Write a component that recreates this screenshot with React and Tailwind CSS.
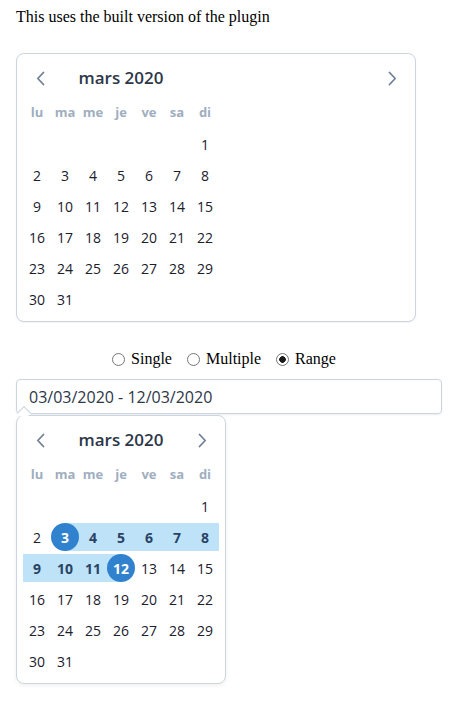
import { useState } from "react";

const WEEKDAYS = ["lu", "ma", "me", "je", "ve", "sa", "di"];

// mars 2020 starts on a sunday
const WEEKS = [
    [null, null, null, null, null, null, 1],
    [2, 3, 4, 5, 6, 7, 8],
    [9, 10, 11, 12, 13, 14, 15],
    [16, 17, 18, 19, 20, 21, 22],
    [23, 24, 25, 26, 27, 28, 29],
    [30, 31, null, null, null, null, null],
];

function Chevron({ dir }) {
    return (
        <svg width="9" height="15" viewBox="0 0 9 15" fill="none">
            <polyline
                points={dir === "left" ? "7.5,1.5 1.8,7.5 7.5,13.5" : "1.5,1.5 7.2,7.5 1.5,13.5"}
                stroke="#718096"
                strokeWidth="1.8"
                strokeLinecap="round"
                strokeLinejoin="round"
            />
        </svg>
    );
}

function DayCell({ day, range }) {
    if (!day) return <div className="h-[28px]"></div>;

    const inRange = range && day >= range[0] && day <= range[1];
    const isEdge = range && (day === range[0] || day === range[1]);

    let band = "";
    if (inRange && day === range[0]) band = "bg-[linear-gradient(to_right,transparent_50%,#bee3f8_50%)]";
    else if (inRange && day === range[1]) band = "bg-[linear-gradient(to_right,#bee3f8_50%,transparent_50%)]";
    else if (inRange) band = "bg-[#bee3f8]";

    return (
        <div className={`flex h-[28px] items-center justify-center ${band}`}>
            <span
                className={
                    isEdge
                        ? "flex h-[28px] w-[28px] items-center justify-center rounded-full bg-[#3182ce] font-bold text-white"
                        : inRange
                        ? "font-bold text-[#2a4365]"
                        : "text-[#1a202c]"
                }
            >
                {day}
            </span>
        </div>
    );
}

function Calendar({ range, className = "" }) {
    return (
        <div
            className={`rounded-lg border border-[#cbd5e0] bg-white px-[6px] pt-[10px] pb-[8px] font-['Open_Sans',sans-serif] ${className}`}
        >
            <div className="flex h-[28px] items-center">
                <button className="flex h-[28px] w-[28px] items-center justify-center pl-[6px]">
                    <Chevron dir="left" />
                </button>
                <div className="w-[140px] text-center text-[17px] font-semibold text-[#2d3748]">mars 2020</div>
                <div className="flex-1"></div>
                <button className="flex h-[28px] w-[28px] items-center justify-center pr-[6px]">
                    <Chevron dir="right" />
                </button>
            </div>

            <div className="mt-[7px] grid w-[196px] grid-cols-7 gap-y-[3px] text-[14px]">
                {WEEKDAYS.map((w) => (
                    <div key={w} className="flex h-[28px] items-center justify-center text-[13px] font-bold text-[#a0aec0]">
                        {w}
                    </div>
                ))}
                {WEEKS.flat().map((d, i) => (
                    <DayCell key={i} day={d} range={range} />
                ))}
            </div>
        </div>
    );
}

function Radio({ label, checked, onChange }) {
    return (
        <label className="flex items-center">
            <input
                type="radio"
                name="mode"
                checked={checked}
                onChange={onChange}
                className="h-[13px] w-[13px] appearance-none rounded-full border border-[#767676] bg-white checked:bg-[radial-gradient(circle,#1a1a1a_0_3px,transparent_3.6px)]"
            />
            <span className="ml-[6px]">{label}</span>
        </label>
    );
}

export default function App() {
    const [mode, setMode] = useState("range");

    return (
        <div className="min-h-screen bg-white px-4 pt-2 font-['Liberation_Serif',serif] text-[16px] text-black">
            <p className="leading-[18px]">This uses the built version of the plugin</p>

            <Calendar className="mt-[27px] w-[400px] shadow-[0_1px_2px_rgba(0,0,0,0.06)]" />

            <div className="mt-[27px] flex h-[20px] w-[426px] items-center justify-center gap-[15px] pr-[10px]">
                <Radio label="Single" checked={mode === "single"} onChange={() => setMode("single")} />
                <Radio label="Multiple" checked={mode === "multiple"} onChange={() => setMode("multiple")} />
                <Radio label="Range" checked={mode === "range"} onChange={() => setMode("range")} />
            </div>

            <div className="relative mt-[10px] w-[426px]">
                <input
                    readOnly
                    value="03/03/2020 - 12/03/2020"
                    className="h-[35px] w-full rounded border border-[#cbd5e0] px-3 font-['Open_Sans',sans-serif] text-[16px] text-[#2d3748] shadow-[0_1px_2px_rgba(0,0,0,0.08)] outline-none"
                />

                <div className="relative mt-[1px] w-[210px]">
                    <div className="absolute top-[-7px] left-[3px] z-10 h-[10px] w-[10px] rotate-45 border-t border-l border-[#cbd5e0] bg-white"></div>
                    <Calendar range={[3, 12]} className="w-[210px] shadow-[0_2px_4px_rgba(0,0,0,0.06)]" />
                </div>
            </div>
        </div>
    );
}
